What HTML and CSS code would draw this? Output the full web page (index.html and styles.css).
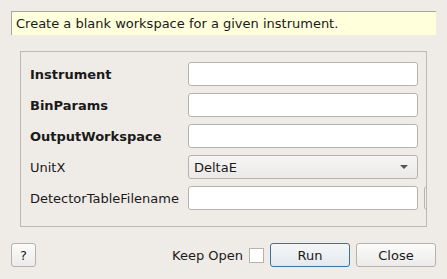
FILE: index.html
```html
<!DOCTYPE html>
<html lang="en">
<head>
    <meta charset="UTF-8">
    <title>CreateSimulationWorkspace</title>
    <link rel="stylesheet" href="styles.css">
</head>
<body>
    <div class="dialog">
        <!-- Algorithm description -->
        <div class="description">Create a blank workspace for a given instrument.</div>

        <!-- Property inputs -->
        <div class="group">
            <div class="row">
                <label class="name required">Instrument</label>
                <input class="field" type="text">
            </div>
            <div class="row">
                <label class="name required">BinParams</label>
                <input class="field" type="text">
            </div>
            <div class="row">
                <label class="name required">OutputWorkspace</label>
                <input class="field" type="text">
            </div>
            <div class="row">
                <label class="name">UnitX</label>
                <div class="combo">
                    <span>DeltaE</span>
                    <span class="arrow"></span>
                </div>
            </div>
            <div class="row">
                <label class="name">DetectorTableFilename</label>
                <input class="field" type="text">
                <button class="browse" title="Browse"></button>
            </div>
        </div>

        <!-- Dialog buttons -->
        <div class="buttons">
            <button class="btn help">?</button>
            <span class="spacer"></span>
            <label class="keep">Keep Open <span class="check"></span></label>
            <button class="btn run">Run</button>
            <button class="btn close">Close</button>
        </div>
    </div>
</body>
</html>
```

FILE: styles.css
```css
/* Page */
body {
    margin: 0;
    background-color: #efebe7;
    font-family: "DejaVu Sans", sans-serif;
    font-size: 13px;
    color: #1a1a1a;
}

.dialog {
    width: 447px;
    height: 279px;
    padding: 11px 0 0 0;
    box-sizing: border-box;
}

/* Description box */
.description {
    margin: 0 11px;
    height: 24px;
    padding-left: 4px;
    background-color: #ffffdc;
    border-top: 1px solid #a8a6a3;
    border-left: 1px solid #a8a6a3;
    box-sizing: border-box;
    line-height: 23px;
}

/* Group box */
.group {
    margin: 16px 0 0 20px;
    width: 407px;
    height: 176px;
    border: 1px solid #bcb8b3;
    box-sizing: border-box;
    padding: 10px 0 0 9px;
    overflow: hidden;
    display: flex;
    flex-direction: column;
    gap: 7px;
}

.row {
    display: flex;
    align-items: center;
    height: 24px;
}

.name {
    width: 158px;
    flex-shrink: 0;
}

.required {
    font-weight: bold;
}

.field,
.combo {
    width: 230px;
    height: 24px;
    box-sizing: border-box;
    border: 1px solid #b6b2ad;
    border-radius: 3px;
    background-color: #fff;
    margin: 0;
    flex-shrink: 0;
}

.combo {
    display: flex;
    align-items: center;
    justify-content: space-between;
    padding: 0 9px 0 5px;
    background: linear-gradient(#f7f6f5, #ebe9e7);
}

.arrow {
    width: 0;
    height: 0;
    border-left: 4px solid transparent;
    border-right: 4px solid transparent;
    border-top: 4px solid #555;
}

.browse {
    margin-left: 6px;
    height: 24px;
    width: 60px;
    flex-shrink: 0;
    border: 1px solid #b6b2ad;
    border-radius: 3px;
    background: #f2f1f0;
}

/* Bottom buttons */
.buttons {
    display: flex;
    align-items: center;
    margin: 16px 11px 0 11px;
    height: 24px;
}

.spacer {
    flex: 1;
}

.btn {
    height: 24px;
    box-sizing: border-box;
    border: 1px solid #b6b2ad;
    border-radius: 3px;
    background: linear-gradient(#fbfbfa, #ecebe9);
    font: inherit;
    color: #1a1a1a;
    padding: 0;
}

.help {
    width: 25px;
}

.run {
    width: 80px;
    margin-left: 6px;
    border-color: #3b73a1;
    background: linear-gradient(#f4f7f9, #e4e9ee);
}

.close {
    width: 80px;
    margin-left: 6px;
}

.keep {
    display: flex;
    align-items: center;
    gap: 6px;
}

.check {
    width: 13px;
    height: 13px;
    border: 1px solid #b6b2ad;
    background-color: #fff;
}
```
